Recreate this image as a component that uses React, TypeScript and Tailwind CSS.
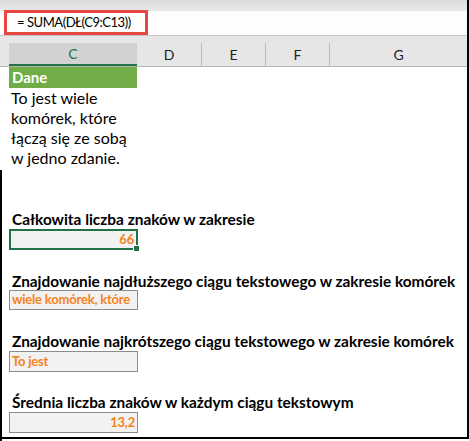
import React from "react";

const font = { fontFamily: "Lato, 'Open Sans', sans-serif" };

function Header() {
  return (
    <div className="h-[31px] bg-[#e6e6e6] border-b border-[#b4b4b4] flex flex-col">
      <div className="h-[10px]" />
      <div className="flex flex-1 text-[14px] text-[#222]">
        <div className="w-[9px]" />
        <div className="w-[128px] bg-[#d2d2d2] border-b-[2px] border-[#217346] flex items-center justify-center text-[#217346]">C</div>
        <div className="w-[65px] border-r border-[#bcbcbc] flex items-center justify-center">D</div>
        <div className="w-[64px] border-r border-[#bcbcbc] flex items-center justify-center">E</div>
        <div className="w-[64px] border-r border-[#bcbcbc] flex items-center justify-center">F</div>
        <div className="flex-1 flex items-center justify-center">G</div>
      </div>
    </div>
  );
}

function Label({ children, h }: { children: React.ReactNode; h: string }) {
  return (
    <div className={"pl-[12px] font-bold text-[15.4px] text-black whitespace-nowrap flex items-center " + h}>
      {children}
    </div>
  );
}

function Box({ children, right, active, h }: { children: React.ReactNode; right?: boolean; active?: boolean; h: string }) {
  return (
    <div className="pl-[9px]">
      <div
        className={
          "relative w-[129px] bg-[#f2f2f2] text-[#f58220] font-bold text-[13px] tracking-[-0.2px] px-[2px] whitespace-nowrap flex items-center " +
          h +
          (right ? " justify-end" : " justify-start") +
          (active ? " border-2 border-[#217346]" : " border border-[#8c8c8c]")
        }
      >
        {children}
        {active && <div className="absolute right-[-4px] bottom-[-4px] w-[5px] h-[5px] bg-[#217346] border border-white box-content" />}
      </div>
    </div>
  );
}

export default function App() {
  return (
    <div style={font} className="w-[469px] h-[441px] bg-white overflow-hidden relative">
      <div className="h-[439px] border-r-2 border-b-2 border-black flex flex-col">
        <div className="h-[11px] bg-gradient-to-b from-[#dcdcdc] to-[#e8e8e8]" />
        <div className="h-[25px] bg-[#fdfdfd] border-b border-[#c6c6c6] flex items-start">
          <div className="ml-[4px] -mt-[1px] w-[144px] h-[25px] border-[3px] border-[#e8483f] flex items-center pl-[10px] text-[13px] tracking-[-0.45px] text-black whitespace-nowrap">
            = SUMA(DŁ(C9:C13))
          </div>
        </div>
        <Header />
        <div className="ml-[9px] w-[128px] h-[21px] bg-[#70ad47] text-white font-bold text-[15px] leading-[21px] pl-[3px]">Dane</div>
        <div className="pl-[11px] text-[16px] leading-[20px] text-black">
          <div>To jest wiele</div>
          <div>komórek, które</div>
          <div>łączą się ze sobą</div>
          <div>w jedno zdanie.</div>
        </div>
        <div className="h-[43px]" />
        <Label h="h-[18px]">Całkowita liczba znaków w zakresie</Label>
        <Box right active h="h-[21px]">66</Box>
        <div className="h-[23px]" />
        <Label h="h-[17px]">Znajdowanie najdłuższego ciągu tekstowego w zakresie komórek</Label>
        <Box h="h-[20px]">wiele komórek, które</Box>
        <div className="h-[23px]" />
        <Label h="h-[18px]">Znajdowanie najkrótszego ciągu tekstowego w zakresie komórek</Label>
        <Box h="h-[21px]">To jest</Box>
        <div className="h-[22px]" />
        <Label h="h-[18px]">Średnia liczba znaków w każdym ciągu tekstowym</Label>
        <Box right h="h-[21px]">13,2</Box>
      </div>
      <div className="absolute left-0 top-[170px] w-[2px] h-[271px] bg-black" />
    </div>
  );
}
